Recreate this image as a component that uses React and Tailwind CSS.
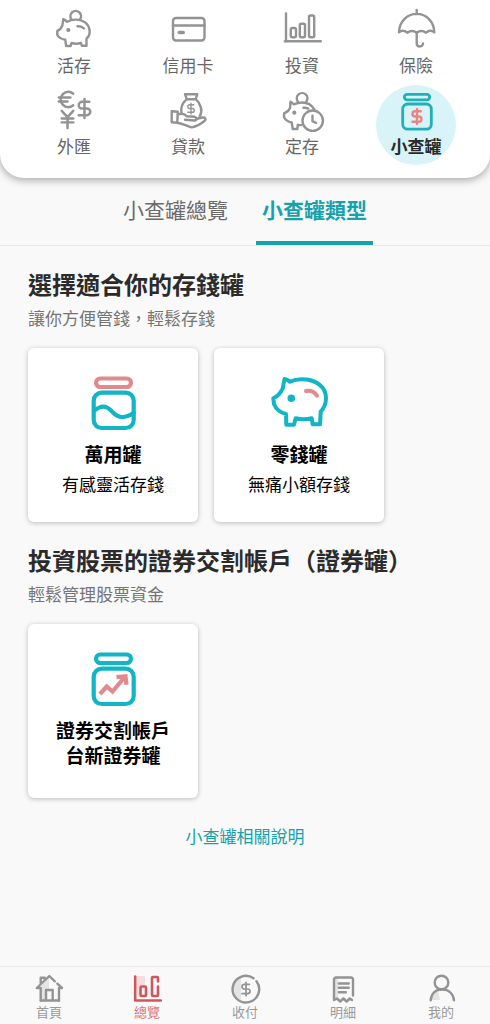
import { useState } from 'react';
import { DollarSign, Euro, JapaneseYen } from 'lucide-react';

function Icon({ size = 42, color = '#939393', width = 2.4, children }) {
  return (
    <svg
      width={size}
      height={size}
      viewBox={`0 0 ${size} ${size}`}
      fill="none"
      stroke={color}
      strokeWidth={width}
      strokeLinecap="round"
      strokeLinejoin="round"
      className="shrink-0 overflow-visible"
      aria-hidden="true"
    >
      {children}
    </svg>
  );
}

// Category icons
const Piggy = () => (
  <Icon>
    <path d="M18.3 11.2a5.3 5.3 0 1 1 8.8 0" />
    <path d="M10.3 11.2c1.5.6 2.6 1.5 3.8 2.6 2.5-1.5 5.5-2.2 8.6-2.2 8 0 14 4.6 14 12.3 0 2.8-1.2 5-3.2 6.8v7.1h-4.6l-1-2.8c-3 .9-6.3.9-9.3 0l-1 3h-4.5l-.8-6.2c-4.5-.8-6.5-2.3-8-4.8v-4c2.2-.7 3.8-2.5 5-5.2z" />
    <path d="M24.5 18.3c2.5-.4 4.7.3 6.5 2.2" />
    <circle cx="15.3" cy="22" r="2.1" fill="#939393" stroke="none" />
  </Icon>
);

const CreditCard = () => (
  <Icon>
    <rect x="6" y="10" width="31.5" height="22.5" rx="3" />
    <path d="M6 17.5h31.5" />
    <rect x="10.5" y="22.8" width="7.5" height="3.4" rx="1.7" fill="#939393" stroke="none" />
  </Icon>
);

const Invest = () => (
  <Icon>
    <path d="M5 5.5v28M3.8 33.2h36" />
    <rect x="9.8" y="20" width="5.2" height="9.2" rx="1.5" />
    <rect x="18.8" y="15.8" width="5.2" height="13.4" rx="1.5" />
    <rect x="28" y="7.5" width="5.2" height="21.7" rx="1.5" />
  </Icon>
);

const Insurance = () => (
  <Icon>
    <path d="M21.7 2v4M4 24.3C4.3 13.5 12 5.9 21.7 5.9S39 13.5 39.3 24.3c-2.6-2-5.5-2-8.3.4-3-2.3-6.2-2.3-9.3 0-3.1-2.3-6.3-2.3-9.3 0-2.9-2.4-5.8-2.4-8.4-.4z" />
    <path d="M21.7 24.5v10.7c0 4.3 6 4.3 6.3.3" />
  </Icon>
);

const Exchange = () => (
  <Icon>
    <Euro x="2" y="-1" size={23} color="#939393" strokeWidth={2.6} />
    <JapaneseYen x="3" y="19" size={23} color="#939393" strokeWidth={2.6} />
    <DollarSign x="20" y="8" size={23} color="#939393" strokeWidth={2.6} />
  </Icon>
);

const Loan = () => (
  <Icon>
    <path d="M19.8 10.2 18 5.2h12.3l-1.6 5zM19.8 10.2c-4.7 4-6.3 8.8-5.3 13.8M28.7 10.2c5.2 4.5 7.3 11.5 4 17.3" />
    <DollarSign x="17.5" y="13" size={13} color="#939393" strokeWidth={2.6} />
    <path d="M4.7 22.2l6 .6-.4 11-5.6-.5zM10.7 25.5c4.5-1.7 7-.6 9.3 1.8l7.5.5c2.7.7 2.5 3.6 0 3.7l-9.5-.8M29 30l6.5-1.5c2.7-.3 4 1.5 2.3 3.2-3.7 3-8 5.6-13.2 6.7-4.6-1.6-9-3.8-14-4.4" />
  </Icon>
);

const FixedDeposit = () => (
  <Icon>
    <path d="M16.8 12.5a5.3 5.3 0 1 1 8.6 0" />
    <path d="M33.3 20.3c-2.5-4.3-6.8-6.8-12.3-6.8-3 0-5.6.6-8 1.9l-3.5-2.7-.4 6.3c-1.5 3-3.5 4.5-6 5.3v4c1.5 3 4 4.5 7.6 5.2l1 6.5h4.6l.5-4c1.2.2 2.2.2 3.5.1" />
    <path d="M22.5 18.8c1.8-.3 3.3 0 4.7.8" />
    <circle cx="13.3" cy="23.7" r="2.1" fill="#939393" stroke="none" />
    <circle cx="31.7" cy="31.7" r="10.2" />
    <path d="M31.5 26.8v5.4l3.7 1.8" />
  </Icon>
);

const SavingJar = () => (
  <Icon color="#1fb0b8" width={2.8}>
    <rect x="9.3" y="5.3" width="25.4" height="5.6" rx="2.8" />
    <rect x="7.7" y="15" width="28.6" height="25.2" rx="5" />
    <DollarSign x="13" y="18.5" size={18} color="#e98584" strokeWidth={3.2} />
  </Icon>
);

// Card icons
const JarShape = ({ lid }) => (
  <>
    <rect x="11" y="2.5" width="35" height="8.5" rx="4.2" stroke={lid} />
    <rect x="8.7" y="16.7" width="40" height="35.3" rx="8" />
  </>
);

const WaveJar = () => (
  <Icon size={56} color="#12b5c5" width={4.2}>
    <JarShape lid="#e08a8c" />
    <path d="M9.5 34.5c6-5 11.5-5.5 16.5 0 7 8 13 8.5 22.5 2.5" />
  </Icon>
);

const CoinPig = () => (
  <Icon size={56} color="#12b5c5" width={4}>
    <path d="M13.5 3c2 .3 3.7 1.3 5.3 2.7C22.5 4 26.5 3.3 30.7 3.3c14 0 24.3 7.2 24.3 19 0 5.5-2 9.7-5.3 13.4L49 48.3h-7.3l-1-6c-5.3 1.3-10.7 1.3-16 0l-1.7 6.4h-7.7L15 38C8.5 36.6 5.3 33.5 3 28.3l-.7-6c4.7-2.3 7.5-5.5 9.5-10.1z" />
    <path d="M35 15c4.5-.9 8.3.7 11 4.6" stroke="#e08a8c" />
    <circle cx="20.3" cy="22.2" r="3.8" fill="#12b5c5" stroke="none" />
  </Icon>
);

const StockJar = () => (
  <Icon size={56} color="#12b5c5" width={4.2}>
    <JarShape lid="#12b5c5" />
    <path
      d="M15 42l6.7-7.5 5.8 5L38.5 26.5M31.5 25.2l9-1 1 8.5"
      stroke="#e08a8c"
      strokeLinecap="butt"
      strokeLinejoin="miter"
    />
  </Icon>
);

// Bottom bar icons
const HomeIcon = () => (
  <Icon size={30}>
    <path d="M7 12l8-9v12h-3v11H7z" fill="#e4e4e4" stroke="none" />
    <path d="M6.7 9.5V3.7h4v2.5M6.7 26.5V14H2.8L15.3 2l5.5 5.3M23.3 9.7l4.7 4.3h-3v12.5" />
    <path d="M6.7 26.5h18.3M12 26.5V16h6.7v10.5" />
  </Icon>
);

const OverviewIcon = () => (
  <Icon size={30} color="#d0565b" width={2.6}>
    <path d="M5 2h8v9H7v11H5z" fill="#f6dcdc" stroke="none" />
    <path d="M3.2 2.5v24h25.6" />
    <rect x="8.5" y="12.5" width="5.5" height="9.5" rx="1" />
    <path d="M26 7.5V4a1 1 0 0 0-1-1h-4a1 1 0 0 0-1 1v17a1 1 0 0 0 1 1h4a1 1 0 0 0 1-1v-8.5" />
  </Icon>
);

const PayIcon = () => (
  <Icon size={30}>
    <path d="M11 2.8a13 13 0 0 0 0 24.5z" fill="#e4e4e4" stroke="none" />
    <path d="M23.5 4.3A13.3 13.3 0 1 0 26.5 7.2" />
    <DollarSign x="8" y="7" size={16} color="#939393" strokeWidth={2.6} />
  </Icon>
);

const DetailIcon = () => (
  <Icon size={30}>
    <path d="M6 4h4v21H6z" fill="#e4e4e4" stroke="none" />
    <path d="M25 21.5V5.5a2 2 0 0 0-2-2H8a2 2 0 0 0-2 2V26l3-1.5 3.2 3 3.2-3 3.2 3 3.2-3 2.2 1.5" />
    <path d="M10.8 9.5h10M10.8 13.8h10M10.8 18.3h7" />
  </Icon>
);

const MineIcon = () => (
  <Icon size={30}>
    <path d="M5 26c.5-5 3-8.5 7-10l2 10z" fill="#e4e4e4" stroke="none" />
    <circle cx="15.5" cy="8.5" r="6.8" />
    <path d="M4.7 26.3C5.2 19.5 9.5 15.5 16 15.5s11.3 4 12 10.8" />
  </Icon>
);

const categories = [
  { name: '活存', icon: Piggy },
  { name: '信用卡', icon: CreditCard },
  { name: '投資', icon: Invest },
  { name: '保險', icon: Insurance },
  { name: '外匯', icon: Exchange },
  { name: '貸款', icon: Loan },
  { name: '定存', icon: FixedDeposit },
  { name: '小查罐', icon: SavingJar },
];

const tabs = ['小查罐總覽', '小查罐類型'];

const navItems = [
  { name: '首頁', icon: HomeIcon },
  { name: '總覽', icon: OverviewIcon },
  { name: '收付', icon: PayIcon },
  { name: '明細', icon: DetailIcon },
  { name: '我的', icon: MineIcon },
];

function JarCard({ icon: CardIcon, title, text }) {
  return (
    <button className="flex min-h-[174px] w-[170px] cursor-pointer flex-col items-center rounded-md bg-white pt-7 pb-6 text-black shadow-[0_1px_5px_rgba(0,0,0,0.25)]">
      <CardIcon />
      <span className="mt-[9px] text-[19px] leading-[25px] font-bold whitespace-pre-line">{title}</span>
      {text && <span className="mt-1.5 text-[17px] leading-6">{text}</span>}
    </button>
  );
}

function Section({ title, text, children }) {
  return (
    <section className="pt-[22px]">
      <h2 className="text-2xl leading-8 font-bold text-[#2b2b2b]">{title}</h2>
      <p className="mt-1.5 text-[17px] leading-6 text-[#757575]">{text}</p>
      <div className="mt-[18px] flex flex-wrap gap-4">{children}</div>
    </section>
  );
}

// The JP face keeps full-width brackets close to the text they wrap
function Brackets({ children }) {
  return (
    <>
      <span lang="ja" className="font-['Noto_Sans_CJK_JP',sans-serif]">（</span>
      {children}
      <span lang="ja" className="font-['Noto_Sans_CJK_JP',sans-serif]">）</span>
    </>
  );
}

export default function App() {
  const [category, setCategory] = useState('小查罐');
  const [tab, setTab] = useState('小查罐類型');
  const [page, setPage] = useState('總覽');

  return (
    <div lang="zh-Hant" className="flex min-h-screen flex-col bg-[#f9f9f9] font-['Noto_Sans_CJK_TC',sans-serif]">
      {/* Categories */}
      <header className="grid grid-cols-4 justify-items-center gap-y-px rounded-b-3xl bg-white px-[17px] pt-1 pb-[13px] shadow-[0_2px_8px_rgba(0,0,0,0.35)]">
        {categories.map((item) => (
          <button
            key={item.name}
            onClick={() => setCategory(item.name)}
            className={`flex size-20 cursor-pointer flex-col items-center rounded-full pt-1 text-[17px] leading-6 ${category === item.name ? 'bg-[#d8f4f8] font-bold text-[#2b2b2b]' : 'text-[#666666]'}`}
          >
            <item.icon />
            <span className="mt-[3px] whitespace-nowrap">{item.name}</span>
          </button>
        ))}
      </header>

      {/* Tabs */}
      <div className="flex justify-center gap-[22px] border-b border-[#e8e8e8] pt-[15px]">
        {tabs.map((name) => (
          <button
            key={name}
            onClick={() => setTab(name)}
            className={`cursor-pointer border-b-4 px-1.5 pb-4 text-[21px] leading-8 ${tab === name ? 'border-[#16a2ad] font-bold text-[#16a2ad]' : 'border-transparent text-[#6b6b6b]'}`}
          >
            {name}
          </button>
        ))}
      </div>

      {/* Jar types */}
      <main className="flex flex-1 flex-col px-7">
        <Section title="選擇適合你的存錢罐" text="讓你方便管錢，輕鬆存錢">
          <JarCard icon={WaveJar} title="萬用罐" text="有感靈活存錢" />
          <JarCard icon={CoinPig} title="零錢罐" text="無痛小額存錢" />
        </Section>
        <Section title={<>投資股票的證券交割帳戶<Brackets>證券罐</Brackets></>} text="輕鬆管理股票資金">
          <JarCard icon={StockJar} title={'證券交割帳戶\n台新證券罐'} />
        </Section>
        <a href="#help" className="mt-[26px] self-center text-[17px] leading-6 text-[#16a2ad]">
          小查罐相關說明
        </a>
      </main>

      {/* Bottom bar */}
      <nav className="grid grid-cols-5 border-t border-[#e8e8e8] pt-[7px] pb-1">
        {navItems.map((item) => (
          <button
            key={item.name}
            onClick={() => setPage(item.name)}
            className={`flex cursor-pointer flex-col items-center text-[13px] leading-4 ${page === item.name ? 'text-[#dc7377]' : 'text-[#999999]'}`}
          >
            <item.icon />
            <span>{item.name}</span>
          </button>
        ))}
      </nav>
    </div>
  );
}
